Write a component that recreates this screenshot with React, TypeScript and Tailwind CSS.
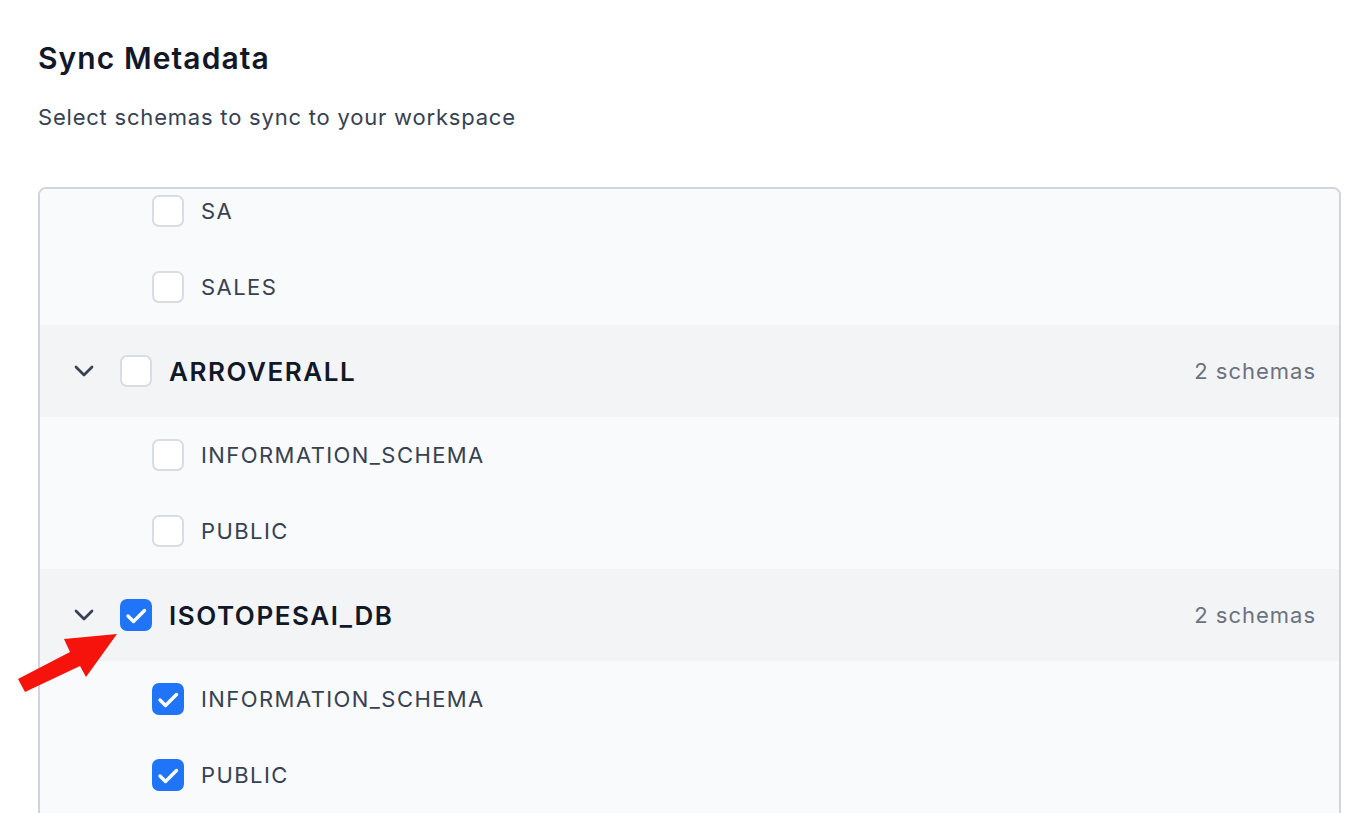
import React from 'react';
import { ChevronDown } from 'lucide-react';

type Schema = { name: string; checked: boolean };

type Database = {
  name: string;
  checked: boolean;
  schemas: Schema[];
};

const Checkbox: React.FC<{ checked: boolean }> = ({ checked }) =>
  checked ? (
    <div className="w-[32px] h-[32px] shrink-0 rounded-[7px] bg-[#1f74f7] flex items-center justify-center">
      <svg width="32" height="32" viewBox="0 0 32 32" fill="none">
        <path
          d="M8 17l5.5 5.5L24.5 11.5"
          stroke="white"
          strokeWidth="3.4"
          strokeLinecap="round"
          strokeLinejoin="round"
        />
      </svg>
    </div>
  ) : (
    <div className="w-[32px] h-[32px] shrink-0 rounded-[7px] border-2 border-[#d9dce1] bg-white" />
  );

const SchemaRow: React.FC<{ schema: Schema }> = ({ schema }) => (
  <div className="h-[76px] flex items-center gap-[17px] pl-[112px] bg-[#f9fafb]">
    <Checkbox checked={schema.checked} />
    <span className="text-[22px] tracking-[0.065em] text-[#374151]">{schema.name}</span>
  </div>
);

const DatabaseRow: React.FC<{ db: Database }> = ({ db }) => (
  <div className="h-[92px] flex items-center pl-[28px] pr-[23px] bg-[#f3f4f6]">
    <ChevronDown size={32} strokeWidth={2} className="text-[#374151] shrink-0" />
    <div className="ml-[20px]">
      <Checkbox checked={db.checked} />
    </div>
    <span className="ml-[17px] text-[26px] tracking-[0.06em] font-semibold text-[#111827]">
      {db.name}
    </span>
    <span className="ml-auto text-[22px] tracking-[0.045em] text-[#6b7280]">
      {db.schemas.length} schemas
    </span>
  </div>
);

const App: React.FC = () => {
  const previous: Schema[] = [
    { name: 'SA', checked: false },
    { name: 'SALES', checked: false },
  ];

  const databases: Database[] = [
    {
      name: 'ARROVERALL',
      checked: false,
      schemas: [
        { name: 'INFORMATION_SCHEMA', checked: false },
        { name: 'PUBLIC', checked: false },
      ],
    },
    {
      name: 'ISOTOPESAI_DB',
      checked: true,
      schemas: [
        { name: 'INFORMATION_SCHEMA', checked: true },
        { name: 'PUBLIC', checked: true },
      ],
    },
  ];

  return (
    <div className="relative h-[813px] overflow-hidden bg-white font-['Inter','Liberation_Sans',sans-serif]">
      <div className="pl-[38px] pr-[31px] pt-[40px]">
        <h1 className="text-[30px] leading-[36px] tracking-[0.036em] font-semibold text-[#111827]">
          Sync Metadata
        </h1>
        <p className="mt-[26px] text-[22px] leading-[30px] tracking-[0.036em] text-[#374151]">
          Select schemas to sync to your workspace
        </p>

        <div className="mt-[55px] h-[700px] rounded-lg border-2 border-[#d1d5db] bg-[#f9fafb] overflow-hidden">
          <div className="-mt-[16px]">
            {previous.map((s) => (
              <SchemaRow key={s.name} schema={s} />
            ))}
            {databases.map((db) => (
              <div key={db.name}>
                <DatabaseRow db={db} />
                {db.schemas.map((s) => (
                  <SchemaRow key={s.name} schema={s} />
                ))}
              </div>
            ))}
          </div>
        </div>
      </div>

      {/* annotation arrow */}
      <svg className="absolute left-0 top-0 pointer-events-none" width="1372" height="813">
        <polygon
          points="18,679 70,652 64,639 117,634 86,677 80,666 25,692"
          fill="#f5130c"
        />
      </svg>
    </div>
  );
};

export default App;
